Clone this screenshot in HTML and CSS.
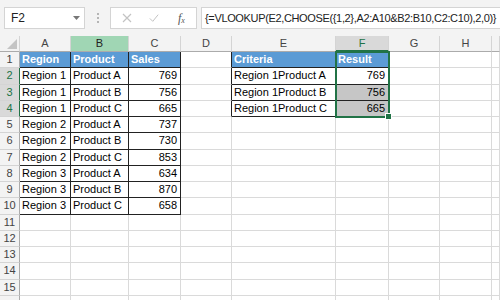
FILE: index.html
```html
<!DOCTYPE html>
<html lang="en">
<head>
  <meta charset="UTF-8" />
  <title>VLOOKUP with CHOOSE</title>
  <link rel="stylesheet" href="styles.css">
</head>
<body>

  <!-- Formula bar -->
  <div class="topbar">
    <div class="namebox">
      <span>F2</span>
      <svg class="caret" viewBox="0 0 7 4"><path d="M0 0H7L3.5 4Z" fill="#777"/></svg>
    </div>
    <div class="dots"><i></i><i></i><i></i></div>
    <div class="controls">
      <svg class="icon" viewBox="0 0 10 10"><path d="M1 1L9 9M9 1L1 9" stroke="#c3c3c3" stroke-width="1.2"/></svg>
      <svg class="icon" viewBox="0 0 12 10"><path d="M1 5.5L4.5 9L11 1" stroke="#c3c3c3" stroke-width="1.2" fill="none"/></svg>
      <span class="fx">f<sub>x</sub></span>
    </div>
    <div class="formula">{=VLOOKUP(E2,CHOOSE({1,2},A2:A10&amp;B2:B10,C2:C10),2,0)}</div>
  </div>

  <!-- Worksheet grid -->
  <div class="sheet">
    <div class="h corner"><span class="tri"></span></div>
    <div class="h">A</div>
    <div class="h h-green">B</div>
    <div class="h">C</div>
    <div class="h">D</div>
    <div class="h">E</div>
    <div class="h h-active">F</div>
    <div class="h">G</div>
    <div class="h">H</div>
    <div class="h"></div>

    <div class="rh">1</div>
    <div class="c t hd">Region</div>
    <div class="c t hd">Product</div>
    <div class="c t hd">Sales</div>
    <div class="c edge"></div>
    <div class="c t hd">Criteria</div>
    <div class="c t hd">Result</div>
    <div class="c"></div><div class="c"></div><div class="c"></div>

    <div class="rh rh-active">2</div>
    <div class="c t">Region 1</div>
    <div class="c t">Product A</div>
    <div class="c t n">769</div>
    <div class="c edge"></div>
    <div class="c t">Region 1Product A</div>
    <div class="c t n">769</div>
    <div class="c"></div><div class="c"></div><div class="c"></div>

    <div class="rh rh-active">3</div>
    <div class="c t">Region 1</div>
    <div class="c t">Product B</div>
    <div class="c t n">756</div>
    <div class="c edge"></div>
    <div class="c t">Region 1Product B</div>
    <div class="c t n picked">756</div>
    <div class="c"></div><div class="c"></div><div class="c"></div>

    <div class="rh rh-active">4</div>
    <div class="c t">Region 1</div>
    <div class="c t">Product C</div>
    <div class="c t n">665</div>
    <div class="c edge"></div>
    <div class="c t">Region 1Product C</div>
    <div class="c t n picked">665</div>
    <div class="c"></div><div class="c"></div><div class="c"></div>

    <div class="rh">5</div>
    <div class="c t">Region 2</div>
    <div class="c t">Product A</div>
    <div class="c t n">737</div>
    <div class="c"></div><div class="c"></div><div class="c"></div><div class="c"></div><div class="c"></div><div class="c"></div>

    <div class="rh">6</div>
    <div class="c t">Region 2</div>
    <div class="c t">Product B</div>
    <div class="c t n">730</div>
    <div class="c"></div><div class="c"></div><div class="c"></div><div class="c"></div><div class="c"></div><div class="c"></div>

    <div class="rh">7</div>
    <div class="c t">Region 2</div>
    <div class="c t">Product C</div>
    <div class="c t n">853</div>
    <div class="c"></div><div class="c"></div><div class="c"></div><div class="c"></div><div class="c"></div><div class="c"></div>

    <div class="rh">8</div>
    <div class="c t">Region 3</div>
    <div class="c t">Product A</div>
    <div class="c t n">634</div>
    <div class="c"></div><div class="c"></div><div class="c"></div><div class="c"></div><div class="c"></div><div class="c"></div>

    <div class="rh">9</div>
    <div class="c t">Region 3</div>
    <div class="c t">Product B</div>
    <div class="c t n">870</div>
    <div class="c"></div><div class="c"></div><div class="c"></div><div class="c"></div><div class="c"></div><div class="c"></div>

    <div class="rh">10</div>
    <div class="c t">Region 3</div>
    <div class="c t">Product C</div>
    <div class="c t n">658</div>
    <div class="c"></div><div class="c"></div><div class="c"></div><div class="c"></div><div class="c"></div><div class="c"></div>

    <div class="rh">11</div>
    <div class="c"></div><div class="c"></div><div class="c"></div><div class="c"></div><div class="c"></div><div class="c"></div><div class="c"></div><div class="c"></div><div class="c"></div>
    <div class="rh">12</div>
    <div class="c"></div><div class="c"></div><div class="c"></div><div class="c"></div><div class="c"></div><div class="c"></div><div class="c"></div><div class="c"></div><div class="c"></div>
    <div class="rh">13</div>
    <div class="c"></div><div class="c"></div><div class="c"></div><div class="c"></div><div class="c"></div><div class="c"></div><div class="c"></div><div class="c"></div><div class="c"></div>
    <div class="rh">14</div>
    <div class="c"></div><div class="c"></div><div class="c"></div><div class="c"></div><div class="c"></div><div class="c"></div><div class="c"></div><div class="c"></div><div class="c"></div>
    <div class="rh">15</div>
    <div class="c"></div><div class="c"></div><div class="c"></div><div class="c"></div><div class="c"></div><div class="c"></div><div class="c"></div><div class="c"></div><div class="c"></div>
    <div class="rh"></div>
    <div class="c"></div><div class="c"></div><div class="c"></div><div class="c"></div><div class="c"></div><div class="c"></div><div class="c"></div><div class="c"></div><div class="c"></div>

    <!-- selected range F1:F4 -->
    <div class="selection"><span class="handle"></span></div>
  </div>

</body>
</html>
```

FILE: styles.css
```css
:root {
  --grid-line: #dadada;
  --head-bg: #f3f3f3;
  --head-text: #444;
  --table-blue: #5b9bd5;
  --excel-green: #217346;
  --picked: #c6c6c6;
}

body {
  margin: 0;
  width: 500px;
  height: 300px;
  overflow: hidden;
  font-family: 'Liberation Sans', Arial, sans-serif;
  font-size: 11px;
  color: #000;
  background: #fff;
}

/* Formula bar */
.topbar {
  height: 36px;
  display: flex;
  align-items: center;
  padding-left: 4px;
  background: var(--head-bg);
  box-sizing: border-box;
  white-space: nowrap;
}

.namebox {
  width: 81px;
  height: 22px;
  box-sizing: border-box;
  border: 1px solid #d4d4d4;
  background: #fff;
  display: flex;
  align-items: center;
  justify-content: space-between;
  padding: 0 4px 0 6px;
  font-size: 12px;
  color: #222;
}

.caret {
  width: 7px;
  height: 4px;
}

.dots {
  width: 2px;
  margin: 0 11px 0 12px;
  display: flex;
  flex-direction: column;
  gap: 2px;
}

.dots i {
  width: 2px;
  height: 2px;
  background: #b5b5b5;
}

.controls {
  width: 87px;
  height: 22px;
  box-sizing: border-box;
  border: 1px solid #d4d4d4;
  background: #fff;
  display: flex;
  align-items: center;
  padding-left: 11px;
  gap: 17px;
}

.icon {
  width: 10px;
  height: 10px;
}

.fx {
  font-family: 'Liberation Serif', serif;
  font-style: italic;
  font-size: 12px;
  color: #555;
  margin-left: 2px;
}

.fx sub {
  font-size: 8px;
  vertical-align: -1px;
}

.formula {
  flex: 1;
  margin-left: 4px;
  height: 22px;
  box-sizing: border-box;
  border: 1px solid #d4d4d4;
  border-right: none;
  background: #fff;
  padding-left: 3px;
  line-height: 20px;
  letter-spacing: -0.35px;
  overflow: hidden;
  color: #222;
}

/* Worksheet */
.sheet {
  position: relative;
  display: grid;
  grid-template-columns: 20px 51px 58px 52px 51px 104px 53px 51px 52px 8px;
  grid-template-rows: 16px repeat(16, 16.25px);
}

.sheet > div {
  box-sizing: border-box;
  border-right: 1px solid var(--grid-line);
  border-bottom: 1px solid var(--grid-line);
  white-space: nowrap;
  overflow: hidden;
  line-height: 15px;
}

.h {
  background: var(--head-bg);
  color: var(--head-text);
  text-align: center;
  border-right-color: #d4d4d4 !important;
  border-bottom-color: #ababab !important;
}

.h-green {
  background: #a0d6b4;
  color: #222;
}

.h-active {
  background: #d9d9d9;
  color: var(--excel-green);
  border-bottom: 2px solid var(--excel-green) !important;
}

.corner {
  position: relative;
}

.tri {
  position: absolute;
  right: 2px;
  bottom: 2px;
  border-left: 10px solid transparent;
  border-bottom: 10px solid #c4c4c4;
}

.rh {
  background: var(--head-bg);
  color: var(--head-text);
  text-align: center;
  border-right-color: #ababab !important;
  border-bottom-color: #d4d4d4 !important;
}

.rh-active {
  background: #d9d9d9;
  color: var(--excel-green);
  border-right: 1px solid var(--excel-green) !important;
}

.c {
  padding: 0 2px;
}

.t {
  border-right-color: #222 !important;
  border-bottom-color: #222 !important;
}

.edge {
  border-right-color: #222 !important;
}

.hd {
  background: var(--table-blue);
  color: #fff;
  font-weight: bold;
}

.n {
  text-align: right;
  padding-right: 3px;
}

.picked {
  background: var(--picked);
}

.selection {
  position: absolute;
  grid-column: 7 / 8;
  grid-row: 2 / 6;
  top: -1px;
  left: -1px;
  right: -1px;
  bottom: -1px;
  border: 2px solid var(--excel-green) !important;
  overflow: visible !important;
  pointer-events: none;
}

.handle {
  position: absolute;
  right: -4px;
  bottom: -4px;
  width: 5px;
  height: 5px;
  background: var(--excel-green);
  border: 1px solid #fff;
}
```
